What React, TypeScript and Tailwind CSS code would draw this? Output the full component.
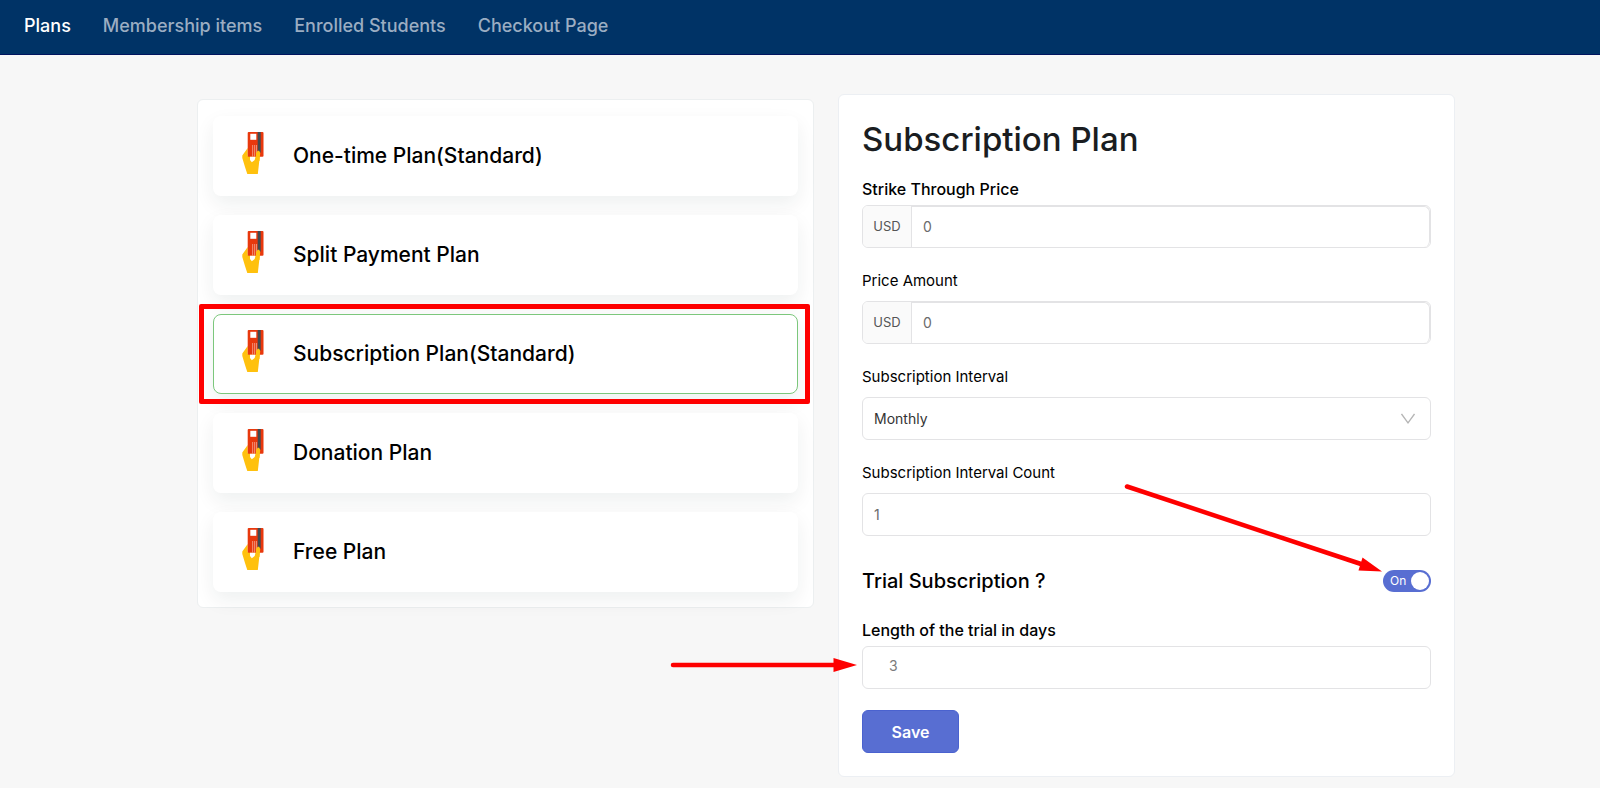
import { useState } from 'react';
import type { ReactNode } from 'react';

const NAV = ['Plans', 'Membership items', 'Enrolled Students', 'Checkout Page'];

const PLANS = [
  'One-time Plan(Standard)',
  'Split Payment Plan',
  'Subscription Plan(Standard)',
  'Donation Plan',
  'Free Plan',
];

const CONTROL =
  'block h-[43px] w-full rounded-md border border-[#e3e3e5] bg-white px-[11px] text-sm outline-none';

function PayIcon() {
  return (
    <svg width="22" height="42" viewBox="0 0 22 42" aria-hidden="true" className="mb-1.5 shrink-0">
      {/* palm */}
      <path d="M5.700 16 0.300 23.500v2.500L3 35l2.300 7h10.500l.7-6 1-9V24H5.700z" fill="#ffc10e" />
      {/* card */}
      <rect x="5.700" y="0" width="15.800" height="24.700" rx="1" fill="#e8380d" />
      <rect x="15.700" y="0" width="3" height="20.500" fill="#414b50" />
      <rect x="8.300" y="1.800" width="6" height="6" fill="#fff" />
      <path d="M10.600 13v11.500M12.600 13v11.500M14.500 13v9" stroke="#f08a70" strokeWidth="1.100" />
      {/* thumb */}
      <path d="M14 24.700V21l1.700-2.300h1.500l1 2.300-.7 8H11l3-1z" fill="#ffc10e" />
      <path d="M8 24.700h5.500l-.8 3.200-2.900 2.300L8 28z" fill="#fff" />
    </svg>
  );
}

function PlanItem({
  name,
  selected,
  onSelect,
}: {
  name: string;
  selected: boolean;
  onSelect: () => void;
}) {
  return (
    <li className="relative">
      <button
        type="button"
        onClick={onSelect}
        aria-pressed={selected}
        className={`flex h-20 w-full items-center gap-[29px] rounded-lg border bg-white pl-7 text-left text-[21px] font-medium text-black shadow-[0_8px_20px_rgba(16,40,40,0.07)] ${
          selected ? 'border-[#7cc77c]' : 'border-transparent'
        }`}
      >
        <PayIcon />
        {name}
      </button>
      {selected && (
        <div className="pointer-events-none absolute -top-2.5 -right-3 -bottom-2.5 -left-3.5 rounded-xs border-5 border-[#fe0000]" />
      )}
    </li>
  );
}

function Field({
  id,
  label,
  strong,
  children,
}: {
  id: string;
  label: string;
  strong?: boolean;
  children: ReactNode;
}) {
  return (
    <div>
      <label
        htmlFor={id}
        className={`block leading-6 text-black ${
          strong ? 'mb-1 text-base font-medium' : 'mb-2 text-[15px]'
        }`}
      >
        {label}
      </label>
      {children}
    </div>
  );
}

function PriceInput({ id }: { id: string }) {
  return (
    <div className="flex h-[43px] overflow-hidden rounded-md border border-[#e3e3e5] text-sm">
      <span className="flex w-[49px] items-center justify-center border-r border-[#e3e3e5] bg-[#fafafa] text-[13px] text-[#555]">
        USD
      </span>
      <input
        id={id}
        type="text"
        defaultValue="0"
        className="min-w-0 flex-1 rounded-r-md border-t border-r border-[#e3e3e5] bg-white px-[11px] text-[#6b6b6b] outline-none"
      />
    </div>
  );
}

export default function App() {
  const [plan, setPlan] = useState(PLANS[2]);
  const [trial, setTrial] = useState(true);

  return (
    <div className="min-h-screen bg-[#f7f7f7] pb-3 font-['Inter',sans-serif]">
      <nav className="flex h-[55px] items-center gap-8 border-b border-[#00145e] bg-[#003366] px-6 pb-0.5 text-lg font-medium">
        {NAV.map((item, i) => (
          <a key={item} href="#" className={i === 0 ? 'text-white' : 'text-[#9badc2]'}>
            {item}
          </a>
        ))}
      </nav>

      <main className="grid grid-cols-2 items-start gap-6 pt-[39px] pr-[145px] pl-[197px]">
        <section className="mt-[5px] rounded-md border border-[#eceff0] bg-white p-[15px] pt-4">
          <ul className="space-y-[19px]">
            {PLANS.map((name) => (
              <PlanItem
                key={name}
                name={name}
                selected={name === plan}
                onSelect={() => setPlan(name)}
              />
            ))}
          </ul>
        </section>

        <form
          onSubmit={(e) => e.preventDefault()}
          className="rounded-md border border-[#eceff3] bg-white px-[23px] pt-6 pb-[23px]"
        >
          <h1 className="mb-[18px] text-[33px] leading-10 font-medium text-[#1a1d21]">
            Subscription Plan
          </h1>

          <div className="space-y-[21px]">
            <Field id="strike" label="Strike Through Price" strong>
              <PriceInput id="strike" />
            </Field>
            <Field id="price" label="Price Amount">
              <PriceInput id="price" />
            </Field>
            <Field id="interval" label="Subscription Interval">
              <div className="relative">
                <select
                  id="interval"
                  defaultValue="Monthly"
                  className={`${CONTROL} appearance-none text-[#333]`}
                >
                  <option>Monthly</option>
                  <option>Yearly</option>
                </select>
                <svg
                  width="14"
                  height="12"
                  viewBox="0 0 14 12"
                  className="pointer-events-none absolute top-4 right-4"
                  fill="none"
                  stroke="#b5b5b5"
                  strokeWidth="1.300"
                >
                  <path d="M0.500 1 7 10l6.500-9" />
                </svg>
              </div>
            </Field>
            <Field id="count" label="Subscription Interval Count">
              <input
                id="count"
                type="text"
                defaultValue="1"
                className={`${CONTROL} text-[#6b6b6b]`}
              />
            </Field>
          </div>

          <div className="mt-[31px] mb-[23px] flex items-center justify-between">
            <h2 className="text-xl leading-7 font-medium text-black">Trial Subscription ?</h2>
            <div className="relative">
              <button
                type="button"
                role="switch"
                aria-checked={trial}
                aria-label="Trial Subscription"
                onClick={() => setTrial(!trial)}
                className="flex h-[22px] w-12 items-center justify-between rounded-full bg-[#586ed2] pr-0.5 pl-[7px] text-xs text-white"
              >
                {trial ? 'On' : 'Off'}
                <span className="size-[18px] rounded-full bg-white" />
              </button>
              <svg
                width="260"
                height="92"
                viewBox="0 0 260 92"
                className="pointer-events-none absolute right-full bottom-[18px]"
                fill="#fe0000"
              >
                <path d="M4 4.500 238 82" stroke="#fe0000" strokeWidth="4.500" strokeLinecap="round" />
                <path d="M259 89.500 239.500 75.500 235.500 88.500z" />
              </svg>
            </div>
          </div>

          <div className="relative">
            <Field id="days" label="Length of the trial in days" strong>
              <input
                id="days"
                type="text"
                defaultValue="3"
                className="block h-[43px] w-full rounded-md border border-[#e3e3e5] bg-white px-[26px] pb-1 text-sm text-[#7b7b7b] outline-none"
              />
            </Field>
            <svg
              width="188"
              height="16"
              viewBox="0 0 188 16"
              className="pointer-events-none absolute right-full bottom-4 mr-1"
              fill="#fe0000"
            >
              <path d="M3 8h164" stroke="#fe0000" strokeWidth="4.500" strokeLinecap="round" />
              <path d="M187 8 163.500 1v14z" />
            </svg>
          </div>

          <button
            type="submit"
            className="mt-[21px] block h-[43px] w-[97px] rounded-md border border-[#4a62cf] bg-[#586ed2] text-base font-semibold text-white"
          >
            Save
          </button>
        </form>
      </main>
    </div>
  );
}
